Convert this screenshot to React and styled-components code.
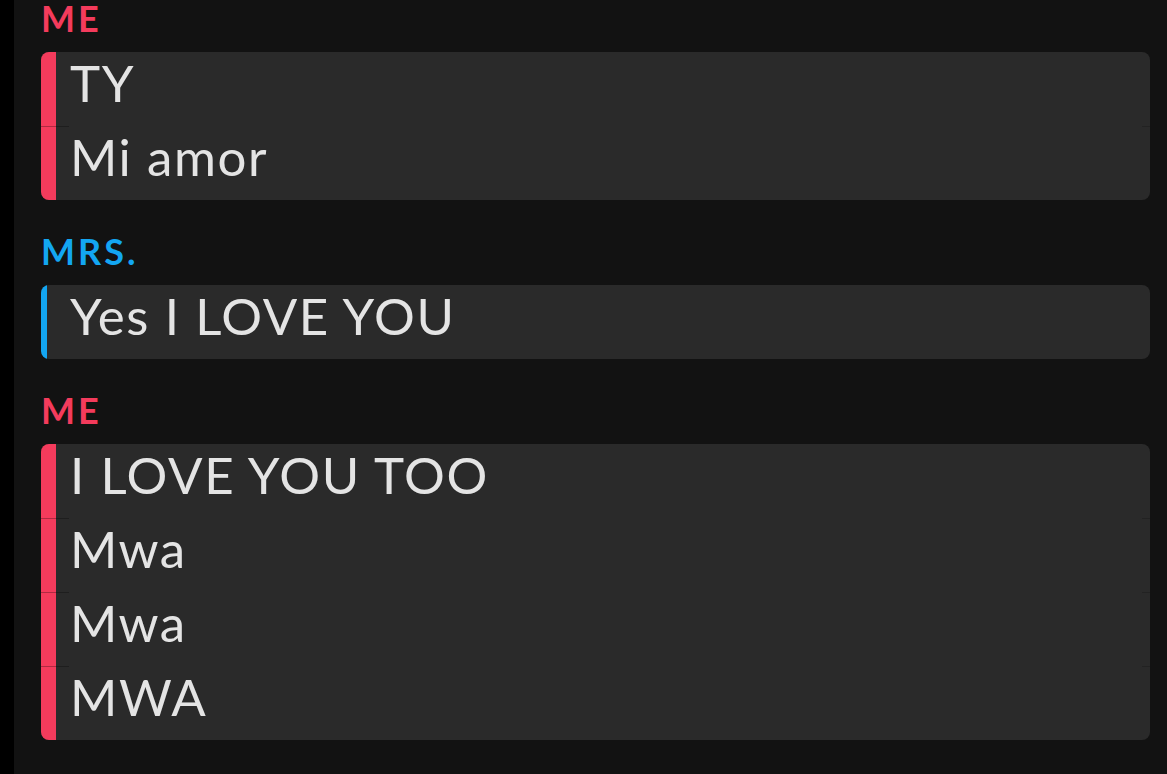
import React from 'react';
import styled, { createGlobalStyle } from 'styled-components';

const Global = createGlobalStyle`
  html, body {
    margin: 0;
    padding: 0;
    background: #000;
    height: 100%;
    overflow: hidden;
  }
  body {
    font-family: Lato, "Noto Sans", sans-serif;
  }
`;

const Screen = styled.div`
  margin-left: 14px;
  min-height: 774px;
  background: #121212;
  padding: 0 17px 0 27px;
  display: flex;
  flex-direction: column;
  gap: 33px;
`;

const Group = styled.section`
  display: flex;
  flex-direction: column;
  gap: 16px;
`;

const Sender = styled.div`
  font-size: 36px;
  line-height: 36px;
  height: 36px;
  font-weight: 700;
  letter-spacing: 3px;
  color: ${p => p.$color};
`;

const Bubble = styled.div`
  background: #2a2a2a;
  border-radius: 8px;
  overflow: hidden;
  display: flex;
  flex-direction: column;
`;

const Row = styled.div`
  position: relative;
  display: flex;
  height: 74px;

  & + &::before {
    content: '';
    position: absolute;
    left: 0;
    top: 0;
    width: 28px;
    height: 1px;
    background: rgba(0, 0, 0, 0.28);
  }
  & + &::after {
    content: '';
    position: absolute;
    right: 0;
    top: 0;
    width: 8px;
    height: 1px;
    background: rgba(0, 0, 0, 0.18);
  }
`;

const Bar = styled.div`
  flex: none;
  width: ${p => p.$width}px;
  background: ${p => p.$color};
`;

const Text = styled.div`
  padding-left: ${p => 29 - p.$bar}px;
  font-size: 51px;
  line-height: 62px;
  letter-spacing: 1.6px;
  color: #e4e4e4;
  white-space: nowrap;
`;

const RED = '#f43b5c';
const BLUE = '#13a6f2';

const chat = [
  { who: 'ME', color: RED, bar: 15, lines: ['TY', 'Mi amor'] },
  { who: 'MRS.', color: BLUE, bar: 6, lines: ['Yes I LOVE YOU'] },
  { who: 'ME', color: RED, bar: 15, lines: ['I LOVE YOU TOO', 'Mwa', 'Mwa', 'MWA'] },
];

export default function App() {
  return (
    <>
      <Global />
      <Screen>
        {chat.map((g, i) => (
          <Group key={i}>
            <Sender $color={g.color}>{g.who}</Sender>
            <Bubble>
              {g.lines.map((t, j) => (
                <Row key={j}>
                  <Bar $width={g.bar} $color={g.color} />
                  <Text $bar={g.bar}>{t}</Text>
                </Row>
              ))}
            </Bubble>
          </Group>
        ))}
      </Screen>
    </>
  );
}
